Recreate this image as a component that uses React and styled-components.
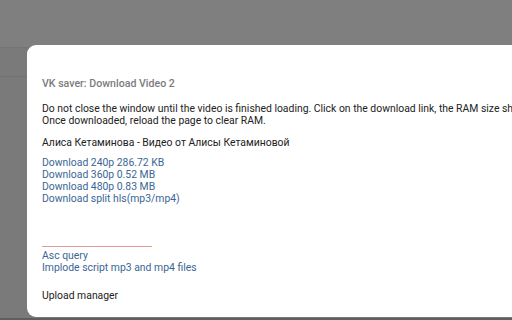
import React from "react";
import styled, { createGlobalStyle } from "styled-components";

const GlobalStyle = createGlobalStyle`
  html, body {
    margin: 0;
    padding: 0;
    width: 512px;
    height: 320px;
    overflow: hidden;
    background: #7f7f7f;
    font-family: Roboto, "Noto Sans", sans-serif;
  }
`;

const Backdrop = styled.div`
  position: relative;
  width: 512px;
  height: 320px;
  background: #7f7f7f;
  overflow: hidden;
`;

const PageStrip = styled.div`
  height: 47px;
  border-bottom: 1px solid #747474;
`;

const Lower = styled.div`
  display: flex;
  background: #7a7a7a;
  height: 272px;
`;

const Gutter = styled.div`
  width: 27px;
  flex-shrink: 0;
`;

const GutterLine = styled.div`
  margin-top: 28px;
  height: 1px;
  background: #707070;
`;

const Modal = styled.div`
  position: absolute;
  left: 27px;
  top: 45px;
  width: 520px;
  height: 272px;
  background: #fff;
  border-radius: 9px;
  box-sizing: border-box;
  padding: 32px 0 0 15px;
  display: flex;
  flex-direction: column;
  white-space: nowrap;
  font-size: 10.4px;
  line-height: 12px;
  color: #222;
`;

const Title = styled.div`
  font-size: 10.6px;
  font-weight: 500;
  line-height: 14px;
  color: #7c7c7c;
  margin-bottom: 12px;
`;

const Paragraph = styled.div`
  margin-bottom: ${(p) => p.$gap || 10}px;
`;

const Line = styled.div``;

const LinkList = styled.div`
  display: flex;
  flex-direction: column;
`;

const Link = styled.a`
  color: #3b6696;
  text-decoration: none;
  cursor: pointer;
`;

const Divider = styled.div`
  width: 110px;
  height: 1px;
  background: #e29b93;
  margin: 41px 0 3px;
`;

const Manager = styled.div`
  margin-top: 16px;
`;

const Footer = styled.div`
  position: absolute;
  left: 0;
  bottom: 0;
  width: 512px;
  height: 2px;
  background: #5f5f5f;
`;

export default function App() {
  return (
    <>
      <GlobalStyle />
      <Backdrop>
        <PageStrip />
        <Lower>
          <Gutter>
            <GutterLine />
          </Gutter>
        </Lower>
        <Footer />
        <Modal>
          <Title>VK saver: Download Video 2</Title>
          <Paragraph>
            <Line>
              Do not close the window until the video is finished loading. Click on the download link, the RAM size should
            </Line>
            <Line>Once downloaded, reload the page to clear RAM.</Line>
          </Paragraph>
          <Paragraph $gap={8}>Алиса Кетаминова - Видео от Алисы Кетаминовой</Paragraph>
          <LinkList>
            <Link>Download 240p 286.72 KB</Link>
            <Link>Download 360p 0.52 MB</Link>
            <Link>Download 480p 0.83 MB</Link>
            <Link>Download split hls(mp3/mp4)</Link>
          </LinkList>
          <Divider />
          <LinkList>
            <Link>Asc query</Link>
            <Link>Implode script mp3 and mp4 files</Link>
          </LinkList>
          <Manager>Upload manager</Manager>
        </Modal>
      </Backdrop>
    </>
  );
}
